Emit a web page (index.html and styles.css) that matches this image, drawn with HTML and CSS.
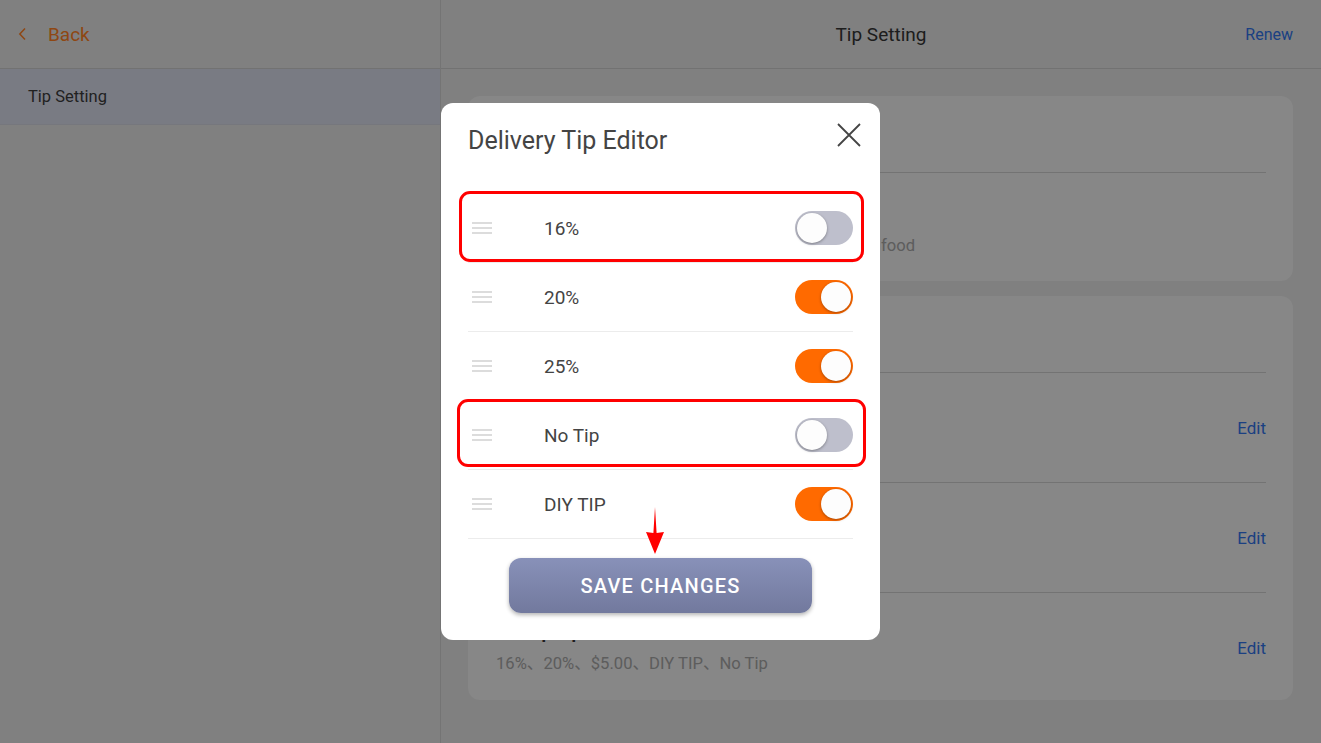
FILE: index.html
```html
<!DOCTYPE html>
<html lang="en">
<head>
<meta charset="utf-8">
<title>Tip Setting</title>
<link rel="stylesheet" href="styles.css">
</head>
<body>
<div class="app">
  <aside class="sidebar">
    <div class="side-head">
      <svg class="back-icon" width="9" height="14" viewBox="0 0 9 14"><path d="M7 1.5 L1.8 7 L7 12.5" fill="none" stroke="#f57a22" stroke-width="1.5"/></svg>
      <span class="back">Back</span>
    </div>
    <div class="menu-item active">Tip Setting</div>
  </aside>
  <main class="main">
    <header class="topbar">
      <span></span>
      <div class="page-title">Tip Setting</div>
      <a class="renew">Renew</a>
    </header>
    <div class="content">
      <section class="card first">
        <div class="card-head">Tip Setting</div>
        <div class="card-row">
          <div class="row-text">
            <div class="row-title">Enable Tips</div>
            <div class="row-sub">Customers may choose to leave a tip when ordering food</div>
          </div>
        </div>
      </section>
      <section class="card">
        <div class="card-head">Tip Options</div>
        <div class="card-row">
          <div class="row-text">
            <div class="row-title">Delivery Tip</div>
            <div class="row-sub">16%、20%、25%、DIY TIP</div>
          </div>
          <a class="edit">Edit</a>
        </div>
        <div class="card-row">
          <div class="row-text">
            <div class="row-title">Dine-in Tip</div>
            <div class="row-sub">15%、18%、20%、DIY TIP</div>
          </div>
          <a class="edit">Edit</a>
        </div>
        <div class="card-row last">
          <div class="row-text">
            <div class="row-title">Pickup Tip</div>
            <div class="row-sub">16%、20%、$5.00、DIY TIP、No Tip</div>
          </div>
          <a class="edit">Edit</a>
        </div>
      </section>
    </div>
  </main>
</div>

<div class="backdrop">
  <div class="modal">
    <div class="modal-head">
      <h2 class="modal-title">Delivery Tip Editor</h2>
      <svg class="close" width="24" height="24" viewBox="0 0 24 24"><path d="M1 1 L23 23 M23 1 L1 23" stroke="#444" stroke-width="1.8"/></svg>
    </div>
    <ul class="tip-list">
      <li class="tip-row">
        <span class="handle"><i></i><i></i><i></i></span>
        <span class="tip-label">16%</span>
        <span class="toggle"></span>
        <span class="mark mark-one"></span>
      </li>
      <li class="tip-row">
        <span class="handle"><i></i><i></i><i></i></span>
        <span class="tip-label">20%</span>
        <span class="toggle on"></span>
      </li>
      <li class="tip-row">
        <span class="handle"><i></i><i></i><i></i></span>
        <span class="tip-label">25%</span>
        <span class="toggle on"></span>
      </li>
      <li class="tip-row">
        <span class="handle"><i></i><i></i><i></i></span>
        <span class="tip-label">No Tip</span>
        <span class="toggle"></span>
        <span class="mark mark-two"></span>
      </li>
      <li class="tip-row">
        <span class="handle"><i></i><i></i><i></i></span>
        <span class="tip-label">DIY TIP</span>
        <span class="toggle on"></span>
      </li>
    </ul>
    <div class="modal-foot">
      <button class="save">SAVE CHANGES</button>
    </div>
    <svg class="arrow" width="20" height="48" viewBox="0 0 20 48"><polygon points="10,0 11.6,26 19,25 10,47 1,25 8.4,26" fill="#ff0000"/></svg>
  </div>
</div>
</body>
</html>
```

FILE: styles.css
```css
* { box-sizing: border-box; }
html, body { margin: 0; padding: 0; }
body {
  width: 1321px;
  height: 743px;
  overflow: hidden;
  font-family: Roboto, "Noto Sans CJK SC", "Noto Sans", sans-serif;
  background: #dcdcdc;
  color: #333;
}
.app {
  display: grid;
  grid-template-columns: 441px 1fr;
  height: 743px;
}
.sidebar {
  border-right: 1px solid #c8c8c8;
  background: #dcdcdc;
}
.side-head {
  height: 69px;
  border-bottom: 1px solid #c4c4c4;
  display: flex;
  align-items: center;
  padding-left: 18px;
  gap: 21px;
}
.back-icon { margin-top: -1px; }
.back {
  font-size: 19px;
  color: #f57a22;
}
.menu-item {
  height: 56px;
  display: flex;
  align-items: center;
  padding-left: 28px;
  font-size: 16.5px;
  color: #3a3a3a;
  border-bottom: 1px solid #cbcdd8;
}
.menu-item.active { background: #d1d4e2; }

.main { display: flex; flex-direction: column; }
.topbar {
  height: 69px;
  border-bottom: 1px solid #c4c4c4;
  display: grid;
  grid-template-columns: 1fr auto 1fr;
  align-items: center;
  padding: 0 28px;
}
.page-title { font-size: 19px; color: #333; }
.renew {
  justify-self: end;
  font-size: 16px;
  color: #2f6fe0;
}
.content {
  padding: 27px 28px 0 27px;
  display: flex;
  flex-direction: column;
  gap: 15px;
}
.card {
  background: #e8e8e8;
  border-radius: 12px;
  padding: 0 27px 0 28px;
}
.card-head {
  height: 77px;
  display: flex;
  align-items: center;
  font-size: 18px;
  font-weight: 700;
  color: #333;
  border-bottom: 1px solid #c6c6c6;
}
.card-row {
  display: flex;
  align-items: center;
  justify-content: space-between;
  padding: 27px 0 26px;
  border-bottom: 1px solid #c6c6c6;
}
.card-row.last { border-bottom: none; padding-bottom: 24px; }
.card.first .card-row { border-bottom: none; padding: 29px 0 23px; }
.row-title { font-size: 18px; font-weight: 700; line-height: 24px; color: #333; }
.row-sub { font-size: 16.6px; line-height: 24px; margin-top: 8px; color: #a0a0a0; white-space: nowrap; }
.edit { font-size: 17px; color: #2f6fe0; }

/* modal */
.backdrop {
  position: fixed;
  inset: 0;
  background: rgba(0, 0, 0, 0.42);
  display: flex;
  align-items: center;
  justify-content: center;
}
.modal {
  position: relative;
  width: 439px;
  height: 537px;
  background: #fff;
  border-radius: 12px;
  padding: 0 27px 27px;
  display: flex;
  flex-direction: column;
}
.modal-head {
  height: 75px;
  display: flex;
  align-items: center;
  justify-content: space-between;
  margin-bottom: 16px;
}
.modal-title {
  margin: 0;
  font-size: 25px;
  font-weight: 400;
  color: #444;
}
.close { margin: -11px -8px 0 0; }
.tip-list { list-style: none; margin: 0; padding: 0; }
.tip-row {
  position: relative;
  height: 69px;
  display: flex;
  align-items: center;
  border-bottom: 1px solid #ececec;
}
.handle {
  width: 20px;
  margin-left: 4px;
  display: flex;
  flex-direction: column;
  gap: 3px;
}
.handle i {
  display: block;
  height: 2px;
  background: #dcdcdc;
}
.tip-label {
  margin-left: 52px;
  flex: 1;
  font-size: 19px;
  color: #444;
}
.toggle {
  position: relative;
  width: 58px;
  height: 34px;
  border-radius: 17px;
  background: #bebfcc;
}
.toggle::after {
  content: "";
  position: absolute;
  top: 2px;
  left: 2px;
  width: 30px;
  height: 30px;
  border-radius: 50%;
  background: #fdfdfd;
  box-shadow: 0 1px 3px rgba(0, 0, 0, 0.35);
}
.toggle.on { background: #ff6a00; }
.toggle.on::after { left: 26px; }
.mark {
  position: absolute;
  border: 3px solid #ff0000;
  border-radius: 11px;
  pointer-events: none;
}
.mark-one { top: -3px; bottom: 0; left: -9px; right: -11px; }
.mark-two { top: -2px; bottom: 2px; left: -11px; right: -13px; }
.modal-foot {
  margin-top: auto;
  display: flex;
  justify-content: center;
}
.save {
  width: 303px;
  height: 55px;
  border: none;
  border-radius: 12px;
  background: linear-gradient(#8891b9, #72799d);
  color: #fff;
  font-family: Roboto, sans-serif;
  font-size: 20px;
  font-weight: 500;
  letter-spacing: 1.2px;
  box-shadow: 0 2px 4px rgba(0, 0, 0, 0.3);
}
.arrow {
  position: absolute;
  left: 204px;
  top: 404px;
}
```
